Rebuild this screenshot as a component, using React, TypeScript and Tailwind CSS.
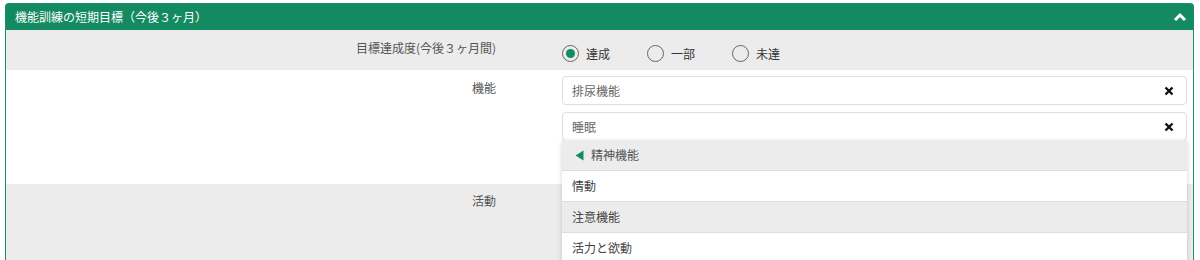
import React from 'react';

const font = { fontFamily: '"Noto Sans CJK JP", "Noto Sans", sans-serif' };

function Radio({ label, checked }: { label: string; checked?: boolean }) {
  return (
    <label className="flex items-center gap-[7px] text-[12px] text-[#333]">
      <span className="flex h-[17px] w-[17px] items-center justify-center rounded-full border-[1.5px] border-[#666]">
        {checked && <span className="h-[9px] w-[9px] rounded-full bg-[#138a61]" />}
      </span>
      {label}
    </label>
  );
}

function Tag({ text }: { text: string }) {
  return (
    <div className="flex h-[29px] items-center justify-between rounded-[4px] border border-[#ddd] bg-white pl-[9px] pr-[12px] text-[12px] text-[#666]">
      <span>{text}</span>
      <svg width="10" height="10" viewBox="0 0 10 10">
        <path d="M1.5 1.5 L8.5 8.5 M8.5 1.5 L1.5 8.5" stroke="#111" strokeWidth="2.4" />
      </svg>
    </div>
  );
}

export default function App() {
  const items = [
    { text: '情動', gray: false },
    { text: '注意機能', gray: true },
    { text: '活力と欲動', gray: false },
  ];

  return (
    <div className="h-[260px] w-[1200px] overflow-hidden bg-white pl-[5px] pr-[6px] pt-[3px]" style={font}>
      <div className="overflow-visible rounded-t-[4px] border border-[#1a8f66] border-b-0">
        <div className="flex h-[26px] items-center justify-between bg-[#138a61] pl-[9px] pr-[6px] text-[12px] text-white">
          <span>機能訓練の短期目標（今後３ヶ月）</span>
          <svg width="14" height="10" viewBox="0 0 14 10">
            <path d="M2 8 L7 3 L12 8" fill="none" stroke="#fff" strokeWidth="3" />
          </svg>
        </div>

        <div className="flex h-[40px] bg-[#ececec]">
          <div className="w-[490px] pt-[9px] text-right text-[12px] text-[#555]">目標達成度(今後３ヶ月間)</div>
          <div className="ml-[66px] flex items-center gap-[37px] pt-[7px]">
            <Radio label="達成" checked />
            <Radio label="一部" />
            <Radio label="未達" />
          </div>
        </div>

        <div className="flex h-[114px] bg-white">
          <div className="w-[490px] pt-[9px] text-right text-[12px] text-[#555]">機能</div>
          <div className="relative ml-[61px] flex flex-1 flex-col pr-[6px] pt-[6px]">
            <div className="ml-[5px] flex flex-col gap-[7px]">
              <Tag text="排尿機能" />
              <Tag text="睡眠" />
            </div>
            <div className="absolute left-[5px] right-[6px] top-[70px] z-10 bg-white shadow-[0_2px_5px_rgba(0,0,0,0.18)]">
              <div className="flex h-[31px] items-center gap-[7px] border-b border-[#ddd] bg-[#ececec] pl-[13px] text-[12px] text-[#555]">
                <svg width="9" height="11" viewBox="0 0 9 11">
                  <path d="M8.5 0.5 L8.5 10.5 L0.5 5.5 Z" fill="#138a61" />
                </svg>
                精神機能
              </div>
              {items.map((it) => (
                <div
                  key={it.text}
                  className={`flex h-[31px] items-center border-b border-[#ddd] pl-[10px] text-[12px] text-[#444] ${it.gray ? 'bg-[#ececec]' : 'bg-white'}`}
                >
                  {it.text}
                </div>
              ))}
            </div>
          </div>
        </div>

        <div className="flex h-[80px] bg-[#ececec]">
          <div className="w-[490px] pt-[8px] text-right text-[12px] text-[#555]">活動</div>
        </div>
      </div>
    </div>
  );
}
